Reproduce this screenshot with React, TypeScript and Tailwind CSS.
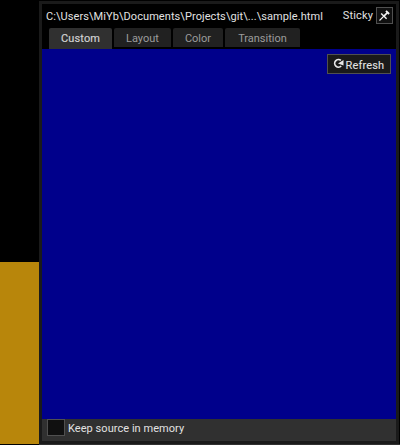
const tabs = [
  { label: "Custom", box: "w-[63px] h-[21px] bg-[#303030] text-[#d4d4d4] tracking-[0.15px] [-webkit-text-stroke:0.15px]" },
  { label: "Layout", box: "w-[57px] h-[19px] bg-[#212121] text-[#9c9c9c]" },
  { label: "Color", box: "w-[50px] h-[19px] bg-[#212121] text-[#9c9c9c]" },
  { label: "Transition", box: "w-[75px] h-[19px] bg-[#212121] text-[#9c9c9c]" },
];

function PinIcon() {
  return (
    <svg width="11" height="11" viewBox="0 0 11 11" fill="none" stroke="#f4f4f4">
      <path d="M0.5 10.5L4 7" strokeWidth="1.1" />
      <path d="M2.2 3.4L7.6 8.8" strokeWidth="1.4" />
      <path d="M4.2 6.8L8.4 2.6" strokeWidth="1.7" />
      <path d="M7 0.9L10.1 4" strokeWidth="1.9" />
    </svg>
  );
}

function RefreshIcon() {
  return (
    <svg className="-mt-px" width="11" height="11" viewBox="0 0 11 11" fill="none">
      <path d="M7.9 2.4A3.8 3.8 0 1 0 8.2 8" stroke="#e8e8e8" strokeWidth="1.7" />
      <path d="M10.5 2V7.4L5 5.6Z" fill="#e8e8e8" />
    </svg>
  );
}

export default function App() {
  return (
    <div className="flex h-[445px] w-[400px] overflow-hidden bg-black font-['Roboto',sans-serif] text-[11px] leading-[13px] text-[#e2e2e2]">
      <aside className="flex w-[39px] shrink-0 flex-col justify-end pb-px">
        <div className="h-[182px] bg-[#b8860b]" />
      </aside>
      <div className="flex w-[361px] flex-col pt-px">
        <main className="flex h-[443px] w-[360px] flex-col border-3 border-[#1a1a1a] bg-black">
          <header className="flex h-6 shrink-0 items-start pl-1 pr-[3px] pt-[3px]">
            <span className="mt-[3px] whitespace-nowrap tracking-[0.075px]">C:\Users\MiYb\Documents\Projects\git\...\sample.html</span>
            <span className="ml-auto mt-0.5 tracking-[0.15px]">Sticky</span>
            <button className="ml-[3px] flex h-[17px] w-[17px] items-center justify-center border border-[#505050] bg-[#101010]">
              <PinIcon />
            </button>
          </header>
          <nav className="flex h-[21px] shrink-0 gap-0.5 pl-[7px]">
            {tabs.map((t) => (
              <div key={t.label} className={`flex items-start justify-center rounded-t-[2px] pt-1 ${t.box}`}>
                {t.label}
              </div>
            ))}
          </nav>
          <section className="flex h-[370px] shrink-0 items-start justify-end bg-[#00008b] pr-[5px] pt-[5px]">
            <button className="flex h-5 w-16 items-start border border-[#505050] bg-[#1a1a1a] pl-[5px] pt-1">
              <RefreshIcon />
              <span className="ml-[1.5px] tracking-[0.15px] [-webkit-text-stroke:0.1px]">Refresh</span>
            </button>
          </section>
          <footer className="flex h-[22px] shrink-0 items-start bg-[#303030] pl-[5px]">
            <div className="h-[17px] w-[18px] border border-[#505050] bg-[#101010]" />
            <span className="ml-[3px] mt-[3px] tracking-[0.05px]">Keep source in memory</span>
          </footer>
        </main>
        <div className="h-px bg-[#303030]" />
      </div>
    </div>
  );
}
